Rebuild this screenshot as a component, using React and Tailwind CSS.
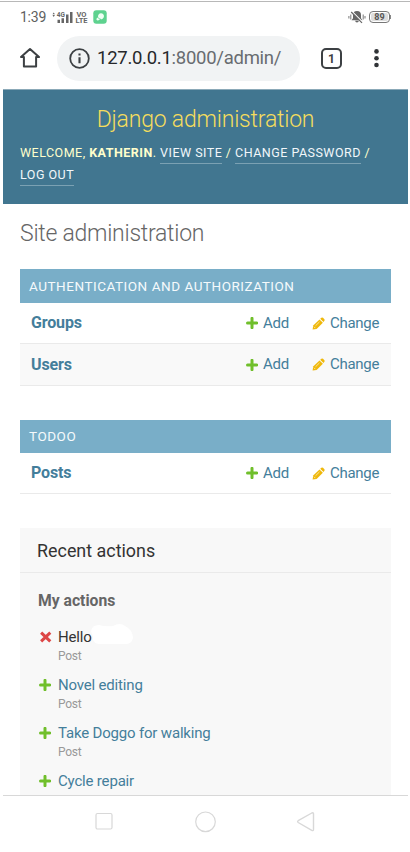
import React from "react";

const Plus = () => (
  <svg width="12" height="12" viewBox="0 0 12 12" className="block shrink-0">
    <path d="M6 1.300V10.700M1.500 6H10.800" stroke="#70bf2b" strokeWidth="3" strokeLinecap="round" />
  </svg>
);

const Cross = () => (
  <svg width="13" height="12" viewBox="0 0 13 12" className="block shrink-0">
    <path d="M3.200 2.700L10.200 9.400M10.200 2.700L3.200 9.400" stroke="#dd4646" strokeWidth="3" strokeLinecap="square" />
  </svg>
);

const Pencil = () => (
  <svg width="13" height="13" viewBox="0 0 13 13" className="block shrink-0">
    <path d="M.6 12.600L1.200 8.600L7.500 2.400L10.900 5.700L4.600 11.900Z" fill="#efb80b" />
    <path d="M8.200 1.700L9.400.7Q10.200.1 11 .8L12.400 2.200Q13 2.900 12.400 3.700L11.500 4.900Z" fill="#efb80b" />
    <path d="M1.900 9.700L3.300 11.100M3.500 8.800L7.500 4.900" stroke="#fff" strokeWidth=".6" />
  </svg>
);

function Row({ name, className }) {
  return (
    <div className={"flex items-center border-b border-[#eaeaea] pl-[11px] text-[#447e9b] " + className}>
      <a className="w-[215px] text-[16px] tracking-[-0.15px] font-bold">{name}</a>
      <Plus />
      <a className="ml-[5px] w-[49px] text-[15px] tracking-[-0.25px]">Add</a>
      <Pencil />
      <a className="ml-[5px] text-[15px] tracking-[-0.3px]">Change</a>
    </div>
  );
}

function Caption({ children, className }) {
  return (
    <h2 className={"flex items-center bg-[#79aec8] pl-[9px] text-[13.500px] tracking-[0.53px] text-[#f5fafc] " + className}>
      {children}
    </h2>
  );
}

function Action({ icon, children, kind = "Post" }) {
  return (
    <li className="flex h-[48px] items-start">
      <span className="mt-[5px] w-[13px]">{icon}</span>
      <div className="ml-[6px]">
        <div className="h-[22px] text-[15px] leading-[22px] tracking-[-0.18px] text-[#447e9b]">{children}</div>
        {kind && <div className="text-[12px] leading-[16px] tracking-[-0.25px] text-[#999]">{kind}</div>}
      </div>
    </li>
  );
}

function StatusBar() {
  return (
    <div className="flex h-[34px] items-center px-[17px] text-[#606060]">
      <span className="mb-[4px] w-[31px] text-[14px] leading-[28px] tracking-[-0.25px]">1:39</span>
      <svg width="24" height="14" viewBox="0 0 24 14" className="mb-[4px] block">
        <path d="M1.200 4.600L2.800 2L4.400 4.600ZM1.200 5.600L2.800 8L4.400 5.600Z" fill="#666" transform="translate(.6 .9) scale(.75)" />
        <text x="5.700" y="6.700" fontFamily="Roboto, sans-serif" fontSize="6.500" fontWeight="700" fill="#666">4G</text>
        <path d="M6.500 9.800h2.500v3.200H6.500zM10.500 8.300h2.500v4.700H10.500zM15 4.500h2.500v8.500h-2.500zM19 2h2.500v11H19z" fill="#666" />
      </svg>
      <svg width="13" height="14" viewBox="0 0 13 14" className="mb-[4px] block" fontFamily="Roboto, sans-serif" fontWeight="700" fill="#666">
        <text x="1.500" y="6.500" fontSize="7.500" textLength="10">VO</text>
        <text x=".5" y="13" fontSize="7.500" textLength="12">LTE</text>
      </svg>
      <svg width="14" height="14" viewBox="0 0 14 14" className="mb-[4px] ml-[5px] block">
        <rect x=".3" y=".3" width="13.400" height="13.400" rx="3" fill="#5ed28f" />
        <path d="M8 3.200a3 3 0 1 1-.8 5.900Q6 10.800 4 10.300Q2.700 9.400 3.800 8.300L5.100 7.200A3.200 3.200 0 0 1 8 3.200Z" fill="#effff4" />
        <path d="M4.800 7.600Q6.500 8.900 7.600 9" fill="none" stroke="#5ed28f" strokeWidth=".8" />
      </svg>
      <div className="grow" />
      <svg width="18" height="14" viewBox="0 0 18 14" className="mb-[4px] block">
        <path d="M9 1a4 4 0 0 1 4 4v3.200l1.500 2H3.500L5 8.200V5a4 4 0 0 1 4-4ZM7.200 10.800h3.600a1.800 1.800 0 0 1-3.600 0Z" fill="#666" />
        <path d="M.9 6v2.500M2.800 4.500v5M15.200 4.500v5M17 6v2.500" stroke="#777" strokeWidth="1" />
        <path d="M4 1.500L15 12.500" stroke="#fff" strokeWidth="1.200" />
        <path d="M3.200 2L14 12.800" stroke="#666" strokeWidth="1.200" />
      </svg>
      <div className="mb-[4px] ml-[3px] flex h-[12px] w-[21px] items-center justify-center rounded-[4px] border border-[#777] bg-white p-[1px]">
        <span className="flex h-[8px] w-full items-center justify-center rounded-[2px] bg-[#ddd] text-[9px] leading-[8px] font-bold text-[#555]">89</span>
      </div>
      <div className="mb-[4px] h-[4px] w-[1px] bg-[#888]" />
    </div>
  );
}

function BrowserBar() {
  return (
    <div className="flex h-[53px] items-start">
      <svg width="20" height="22" viewBox="0 0 20 22" className="ml-[17px] mt-[11px] block">
        <path d="M3.900 10H1L10 2L19 10H16.100V19.500H3.900Z" fill="none" stroke="#3c4043" strokeWidth="2" strokeLinejoin="round" />
      </svg>
      <div className="ml-[17px] flex h-[45px] w-[243px] items-center rounded-full bg-[#f1f3f4] pl-[12px]">
        <svg width="21" height="21" viewBox="0 0 21 21" className="block shrink-0">
          <circle cx="10.500" cy="10.500" r="9.300" fill="none" stroke="#3c4043" strokeWidth="1.800" />
          <path d="M10.500 9.300V15.300M10.500 5.400V7.500" stroke="#3c4043" strokeWidth="2.100" />
        </svg>
        <span className="ml-[7px] pt-px text-[18.500px] tracking-[-0.27px] whitespace-nowrap text-[#686c70]">
          <span className="text-[#26282b]">127.0.0.1</span>:8000/admin/
        </span>
      </div>
      <div className="ml-[21px] mt-[12px] flex size-[21px] items-center justify-center rounded-[5px] border-2 border-[#3c4043] text-[12px] leading-none font-bold text-[#3c4043]">
        1
      </div>
      <svg width="6" height="20" viewBox="0 0 6 20" className="ml-[31px] mt-[12px] block">
        <circle cx="3.500" cy="3.400" r="2.300" fill="#303336" />
        <circle cx="3.500" cy="10.200" r="2.300" fill="#303336" />
        <circle cx="3.500" cy="17" r="2.300" fill="#303336" />
      </svg>
    </div>
  );
}

const linkClass = "border-b border-[#7ba1b3] pb-[3px] text-[#f2f7fa]";

export default function App() {
  return (
    <div className="h-[852px] w-[410px] overflow-hidden bg-white pl-[3px] pr-[2px] font-['Roboto',sans-serif]">
      <div className="-ml-[3px] -mr-[2px] mt-[1px] h-px bg-[#b8b8b8]" />
      <StatusBar />
      <BrowserBar />
      <header className="h-[115px] border-t border-[#8ba9b8] bg-[#417690] px-[17px] pt-[13px] text-[#ffffcc]">
        <h1 className="h-[33px] text-center text-[23px] leading-[33px] tracking-[-0.2px] font-light whitespace-nowrap text-[#f5dd5d]">
          Django administration
        </h1>
        <div className="mt-[6px] text-[12.500px] leading-[22px] tracking-[0.48px] whitespace-nowrap">
          WELCOME, <b>KATHERIN</b>.{" "}
          <a className={linkClass}>VIEW SITE</a> /{" "}
          <a className={linkClass}>CHANGE PASSWORD</a> /<br />
          <a className={linkClass}>LOG OUT</a>
        </div>
      </header>
      <main className="h-[591px] overflow-hidden px-[17px]">
        <h1 className="h-[65px] pt-[15px] text-[23px] leading-[30px] tracking-[-0.25px] font-light text-[#666]">Site administration</h1>
        <section>
          <Caption className="h-[34px]">AUTHENTICATION AND AUTHORIZATION</Caption>
          <Row name="Groups" className="h-[41px]" />
          <Row name="Users" className="h-[42px] bg-[#f9f9f9]" />
        </section>
        <section className="mt-[34px]">
          <Caption className="h-[33px]">TODOO</Caption>
          <Row name="Posts" className="h-[41px]" />
        </section>
        <aside className="mt-[34px] h-[267px] bg-[#f8f8f8]">
          <h2 className="flex h-[45px] items-center border-b border-[#eaeaea] pl-[17px] pt-[2px] text-[17.900px] text-[#333]">
            Recent actions
          </h2>
          <h3 className="pl-[18px] pt-[17px] text-[15.700px] leading-[22px] font-bold text-[#666]">My actions</h3>
          <ul className="pl-[19px] pt-[14px]">
            <Action icon={<Cross />}>
              <span className="flex text-[#333]">
                Hello
                <svg width="46" height="22" viewBox="0 0 46 22" className="-ml-[1px] block overflow-visible">
                  <path d="M0 5Q1-1 8-1Q14 1 22 0Q29-4 34 0Q42 4 42 12Q41 18 34 18H8Q1 17 2 11Z" fill="#fff" />
                </svg>
              </span>
            </Action>
            <Action icon={<Plus />}>Novel editing</Action>
            <Action icon={<Plus />}>Take Doggo for walking</Action>
            <Action icon={<Plus />} kind="">Cycle repair</Action>
          </ul>
        </aside>
      </main>
      <nav className="flex h-[57px] items-start border-t border-[#d8d8d8] bg-white pl-[91px] pt-[15px]">
        <svg width="19" height="20" viewBox="0 0 19 20" className="block">
          <rect x="2" y="2.500" width="16" height="15.500" rx="1.500" fill="none" stroke="#d8d8d8" strokeWidth="1.200" />
        </svg>
        <svg width="22" height="22" viewBox="0 0 22 22" className="ml-[81px] block">
          <circle cx="11.500" cy="10.800" r="9.800" fill="none" stroke="#d8d8d8" strokeWidth="1.200" />
        </svg>
        <svg width="20" height="22" viewBox="0 0 20 22" className="ml-[80px] block">
          <path d="M2.200 9.700L15.800 2Q17.500 1.200 17.500 2.700V18.200Q17.500 20.200 15.800 19.400L2.200 11.500Q1 10.600 2.200 9.700Z" fill="none" stroke="#d8d8d8" strokeWidth="1.400" />
        </svg>
      </nav>
    </div>
  );
}
